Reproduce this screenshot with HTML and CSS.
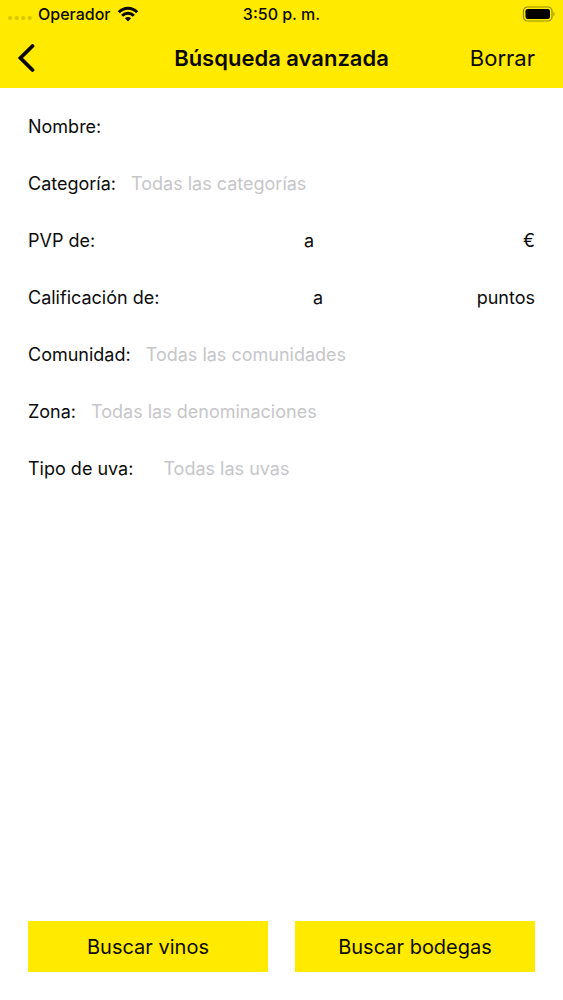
FILE: index.html
```html
<!DOCTYPE html>
<html lang="es">
<head>
<meta charset="utf-8">
<meta name="viewport" content="width=device-width, initial-scale=1">
<title>Búsqueda avanzada</title>
<link rel="stylesheet" href="styles.css">
</head>
<body>
<div class="screen">
  <header class="top">
    <div class="status">
      <div class="carrier">
        <svg class="dots" width="24" height="6" viewBox="0 0 24 6" aria-hidden="true"><g fill="#d9c400"><circle cx="2.2" cy="3" r="2.1"/><circle cx="8.7" cy="3" r="2.1"/><circle cx="15.2" cy="3" r="2.1"/><circle cx="21.7" cy="3" r="2.1"/></g></svg>
        <span>Operador</span>
        <svg class="wifi" width="22" height="16" viewBox="0 0 22 16" aria-hidden="true"><g fill="none" stroke="#0c0a00" stroke-width="3"><path d="M1.800 6.200C7 .8 15 .8 20.200 6.200"/><path d="M5.100 9.700C8.400 6.400 13.600 6.400 16.900 9.700"/></g><path d="M11 15.400L7.900 12.300Q11 9.600 14.100 12.300Z" fill="#0c0a00"/></svg>
      </div>
      <span class="time">3:50 p. m.</span>
      <svg class="battery" width="33" height="16" viewBox="0 0 33 16" aria-hidden="true"><rect x="1.500" y="1" width="28.500" height="14" rx="4" fill="none" stroke="#958a00" stroke-width="1.200"/><rect x="3.500" y="3" width="24.500" height="10" rx="2.200" fill="#000"/><path d="M31.500 5.500Q33.500 8 31.500 10.500Z" fill="#958a00"/></svg>
    </div>
    <nav class="bar">
      <button class="back" type="button" aria-label="Atrás"><svg width="18" height="30" viewBox="0 0 18 30" aria-hidden="true"><path d="M14.500 3L2.400 15L14.500 27" fill="none" stroke="#0c0a00" stroke-width="3.800" stroke-linecap="round" stroke-linejoin="miter"/></svg></button>
      <h1 class="title">Búsqueda avanzada</h1>
      <button class="clear" type="button">Borrar</button>
    </nav>
  </header>
  <form class="form">
    <div class="fields">
      <div class="row"><label for="nombre">Nombre:</label><input id="nombre" type="text"></div>
      <div class="row"><label for="categoria">Categoría:</label><input id="categoria" type="text" placeholder="Todas las categorías"></div>
      <div class="row"><label for="pvp-min">PVP de:</label><input id="pvp-min" type="text"><label for="pvp-max">a</label><input id="pvp-max" type="text"><span>€</span></div>
      <div class="row"><label for="cal-min">Calificación de:</label><input id="cal-min" type="text"><label for="cal-max">a</label><input id="cal-max" type="text"><span>puntos</span></div>
      <div class="row"><label for="comunidad">Comunidad:</label><input id="comunidad" type="text" placeholder="Todas las comunidades"></div>
      <div class="row"><label for="zona">Zona:</label><input id="zona" type="text" placeholder="Todas las denominaciones"></div>
      <div class="row row-wide"><label for="uva">Tipo de uva:</label><input id="uva" type="text" placeholder="Todas las uvas"></div>
    </div>
    <div class="actions">
      <button class="action" type="submit">Buscar vinos</button>
      <button class="action" type="submit">Buscar bodegas</button>
    </div>
  </form>
</div>
</body>
</html>
```
FILE: styles.css
```css
* { box-sizing: border-box; }
body {
  margin: 0;
  background: #fff;
  color: #0c0c0c;
  font-family: Inter, "Liberation Sans", sans-serif;
  font-size: 18px;
}
button, input {
  font: inherit;
  color: inherit;
  border: 0;
  border-radius: 0;
  padding: 0;
  margin: 0;
  background: none;
}
svg { display: block; }
.screen {
  min-height: 100vh;
  display: flex;
  flex-direction: column;
}
.top { background: #ffea00; color: #0c0a00; }
.status, .bar {
  display: grid;
  grid-template-columns: 1fr auto 1fr;
  align-items: center;
}
.status {
  height: 28px;
  padding: 0 8px;
  font-size: 16px;
  font-weight: 500;
}
.carrier { display: flex; align-items: center; gap: 6px; }
.dots { margin-top: 8px; }
.battery { justify-self: end; }
.bar { height: 60px; }
.back { justify-self: start; padding-left: 18px; }
.title {
  margin: 0;
  font-size: 22px;
  font-weight: 600;
}
.clear {
  justify-self: end;
  padding-right: 28px;
  font-size: 22px;
}
.form {
  flex: 1;
  display: flex;
  flex-direction: column;
  justify-content: space-between;
  padding: 10px 28px 28px;
}
.row {
  display: flex;
  align-items: center;
  gap: 15px;
  height: 57px;
}
.row-wide { gap: 30px; }
.row input {
  flex: 1;
  min-width: 0;
  height: 36px;
}
.row input::placeholder { color: #c6c6c9; opacity: 1; }
.actions {
  display: grid;
  grid-template-columns: 1fr 1fr;
  gap: 27px;
}
.action {
  height: 51px;
  background: #ffea00;
  color: #0c0a00;
  font-size: 20px;
}
```
